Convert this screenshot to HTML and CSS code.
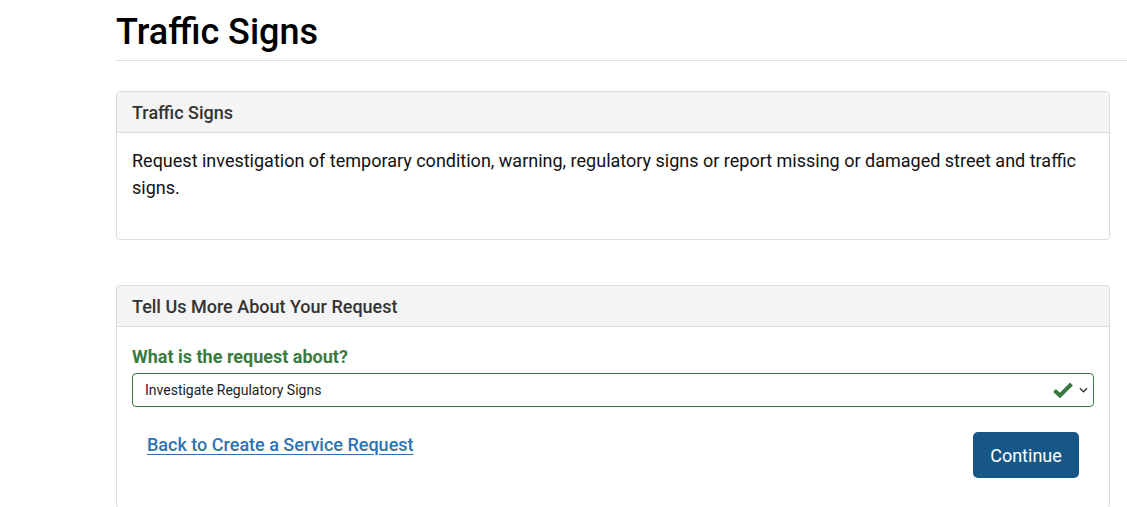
FILE: index.html
```html
<!DOCTYPE html>
<html lang="en">
<head>
  <meta charset="UTF-8" />
  <meta name="viewport" content="width=device-width, initial-scale=1.0"/>
  <title>Traffic Signs</title>
  <link rel="stylesheet" href="styles.css">
</head>
<body>

  <div class="page">
    <h1 class="page-title">Traffic Signs</h1>

    <div class="panel">
      <div class="panel-heading">Traffic Signs</div>
      <div class="panel-body intro">
        Request investigation of temporary condition, warning, regulatory signs or report missing or damaged street and traffic signs.
      </div>
    </div>

    <div class="panel">
      <div class="panel-heading">Tell Us More About Your Request</div>
      <div class="panel-body">
        <label class="field-label" for="request_type">What is the request about?</label>
        <div class="select-wrap">
          <select id="request_type" class="field-select">
            <option>Investigate Regulatory Signs</option>
          </select>
          <svg class="valid-icon" viewBox="0 0 20 16" width="20" height="16" aria-hidden="true">
            <path d="M1.5 8.5 L7 13.5 L18.5 2" fill="none" stroke="#3b7a3e" stroke-width="4" stroke-linejoin="miter"/>
          </svg>
          <svg class="chevron" viewBox="0 0 10 6" width="9" height="6" aria-hidden="true">
            <path d="M1 1 L5 5 L9 1" fill="none" stroke="#333" stroke-width="1.4"/>
          </svg>
        </div>

        <div class="actions">
          <a href="#" class="back-link">Back to Create a Service Request</a>
          <button type="button" class="btn-continue">Continue</button>
        </div>
      </div>
    </div>
  </div>

</body>
</html>
```

FILE: styles.css
```css
/* Base */
body {
  margin: 0;
  font-family: Roboto, "Liberation Sans", sans-serif;
  background: #ffffff;
  color: #111;
}

.page {
  padding-left: 116px;
}

.page-title {
  margin: 0;
  padding-top: 12px;
  padding-bottom: 7px;
  font-size: 36px;
  font-weight: 500;
  line-height: 41px;
  color: #000;
  border-bottom: 1px solid #e0e0e0;
}

/* Panels */
.panel {
  margin: 30px 17px 45px 0;
  border: 1px solid #dcdcdc;
  border-radius: 4px;
  background: #fff;
}

.panel-heading {
  height: 40px;
  padding: 0 15px;
  display: flex;
  align-items: center;
  background: #f4f4f4;
  border-bottom: 1px solid #dcdcdc;
  border-radius: 4px 4px 0 0;
  font-size: 18px;
  font-weight: 500;
  color: #333;
}

.panel-body {
  padding: 15px 15px 30px;
}

.intro {
  font-size: 18px;
  line-height: 27px;
  color: #111;
  padding-top: 14px;
  padding-bottom: 38px;
}

/* Form */
.field-label {
  display: block;
  margin-top: 4px;
  margin-bottom: 6px;
  font-size: 18px;
  font-weight: 700;
  color: #3b7a3e;
}

.select-wrap {
  position: relative;
}

.field-select {
  width: 100%;
  height: 34px;
  padding: 0 12px;
  border: 1px solid #3b7a3e;
  border-radius: 4px;
  background: #fff;
  font-family: Roboto, "Liberation Sans", sans-serif;
  font-size: 14px;
  color: #222;
  appearance: none;
  -webkit-appearance: none;
  outline: none;
}

.valid-icon {
  position: absolute;
  right: 21px;
  top: 9px;
}

.chevron {
  position: absolute;
  right: 6px;
  top: 14px;
}

.actions {
  display: flex;
  justify-content: space-between;
  align-items: flex-start;
  padding: 25px 15px 0;
}

.back-link {
  margin-top: 2px;
  font-size: 18px;
  font-weight: 500;
  color: #2b74b8;
  text-decoration: underline;
  text-underline-offset: 3px;
}

.btn-continue {
  width: 106px;
  height: 46px;
  border: none;
  border-radius: 5px;
  background: #175788;
  color: #fff;
  font-family: Roboto, "Liberation Sans", sans-serif;
  font-size: 18px;
  cursor: pointer;
}
```
